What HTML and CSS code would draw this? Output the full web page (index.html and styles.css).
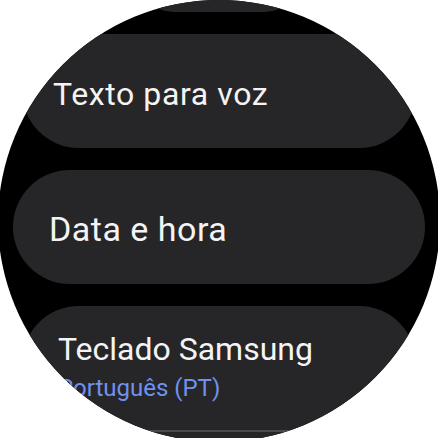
FILE: index.html
```html
<!DOCTYPE html>
<html lang="pt">
<head>
    <meta charset="UTF-8">
    <meta name="viewport" content="width=device-width, initial-scale=1.0">
    <title>Definições</title>
    <link rel="stylesheet" href="styles.css">
</head>
<body>
    <div class="watch">
        <div class="list">
            <div class="chip chip-edge"></div>
            <div class="chip chip-wide chip-top">
                <span class="chip-title">Texto para voz</span>
            </div>
            <div class="chip chip-full chip-mid">
                <span class="chip-title">Data e hora</span>
            </div>
            <div class="chip chip-wide chip-two">
                <span class="chip-title">Teclado Samsung</span>
                <span class="chip-sub">Português (PT)</span>
            </div>
        </div>
    </div>
</body>
</html>
```

FILE: styles.css
```css
html, body { margin: 0; padding: 0; background: #fff; overflow: hidden; }
body { font-family: Roboto, "Noto Sans", sans-serif; color: #f4f4f4; }
.watch { width: 442px; height: 442px; margin-left: -2px; border-radius: 50%; overflow: hidden; background: #000; }
.list { display: flex; flex-direction: column; align-items: center; gap: 22px; margin-top: -68px; }
.chip { box-sizing: border-box; height: 114px; border-radius: 57px; background: #262628; display: flex; flex-direction: column; justify-content: center; padding-left: 36px; }
.chip-edge { width: 170px; height: 80px; border-radius: 40px; }
.chip-wide { width: 394px; }
.chip-full { width: 412px; }
.chip-top { padding-left: 31px; padding-top: 6px; }
.chip-top .chip-title { letter-spacing: 0.6px; }
.chip-mid { padding-top: 3px; }
.chip-mid .chip-title { font-size: 34px; letter-spacing: 0.5px; }
.chip-two { position: relative; height: 140px; justify-content: flex-start; padding-top: 24px; border-radius: 57px 57px 0 0; }
.chip-two::after { content: ""; position: absolute; left: 0; right: 0; top: 124px; height: 2px; background: #4a4a4c; }
.chip-title { font-size: 32px; line-height: 38px; white-space: nowrap; }
.chip-sub { font-size: 24px; line-height: 28px; margin-top: 6px; color: #7191ef; white-space: nowrap; }
```
